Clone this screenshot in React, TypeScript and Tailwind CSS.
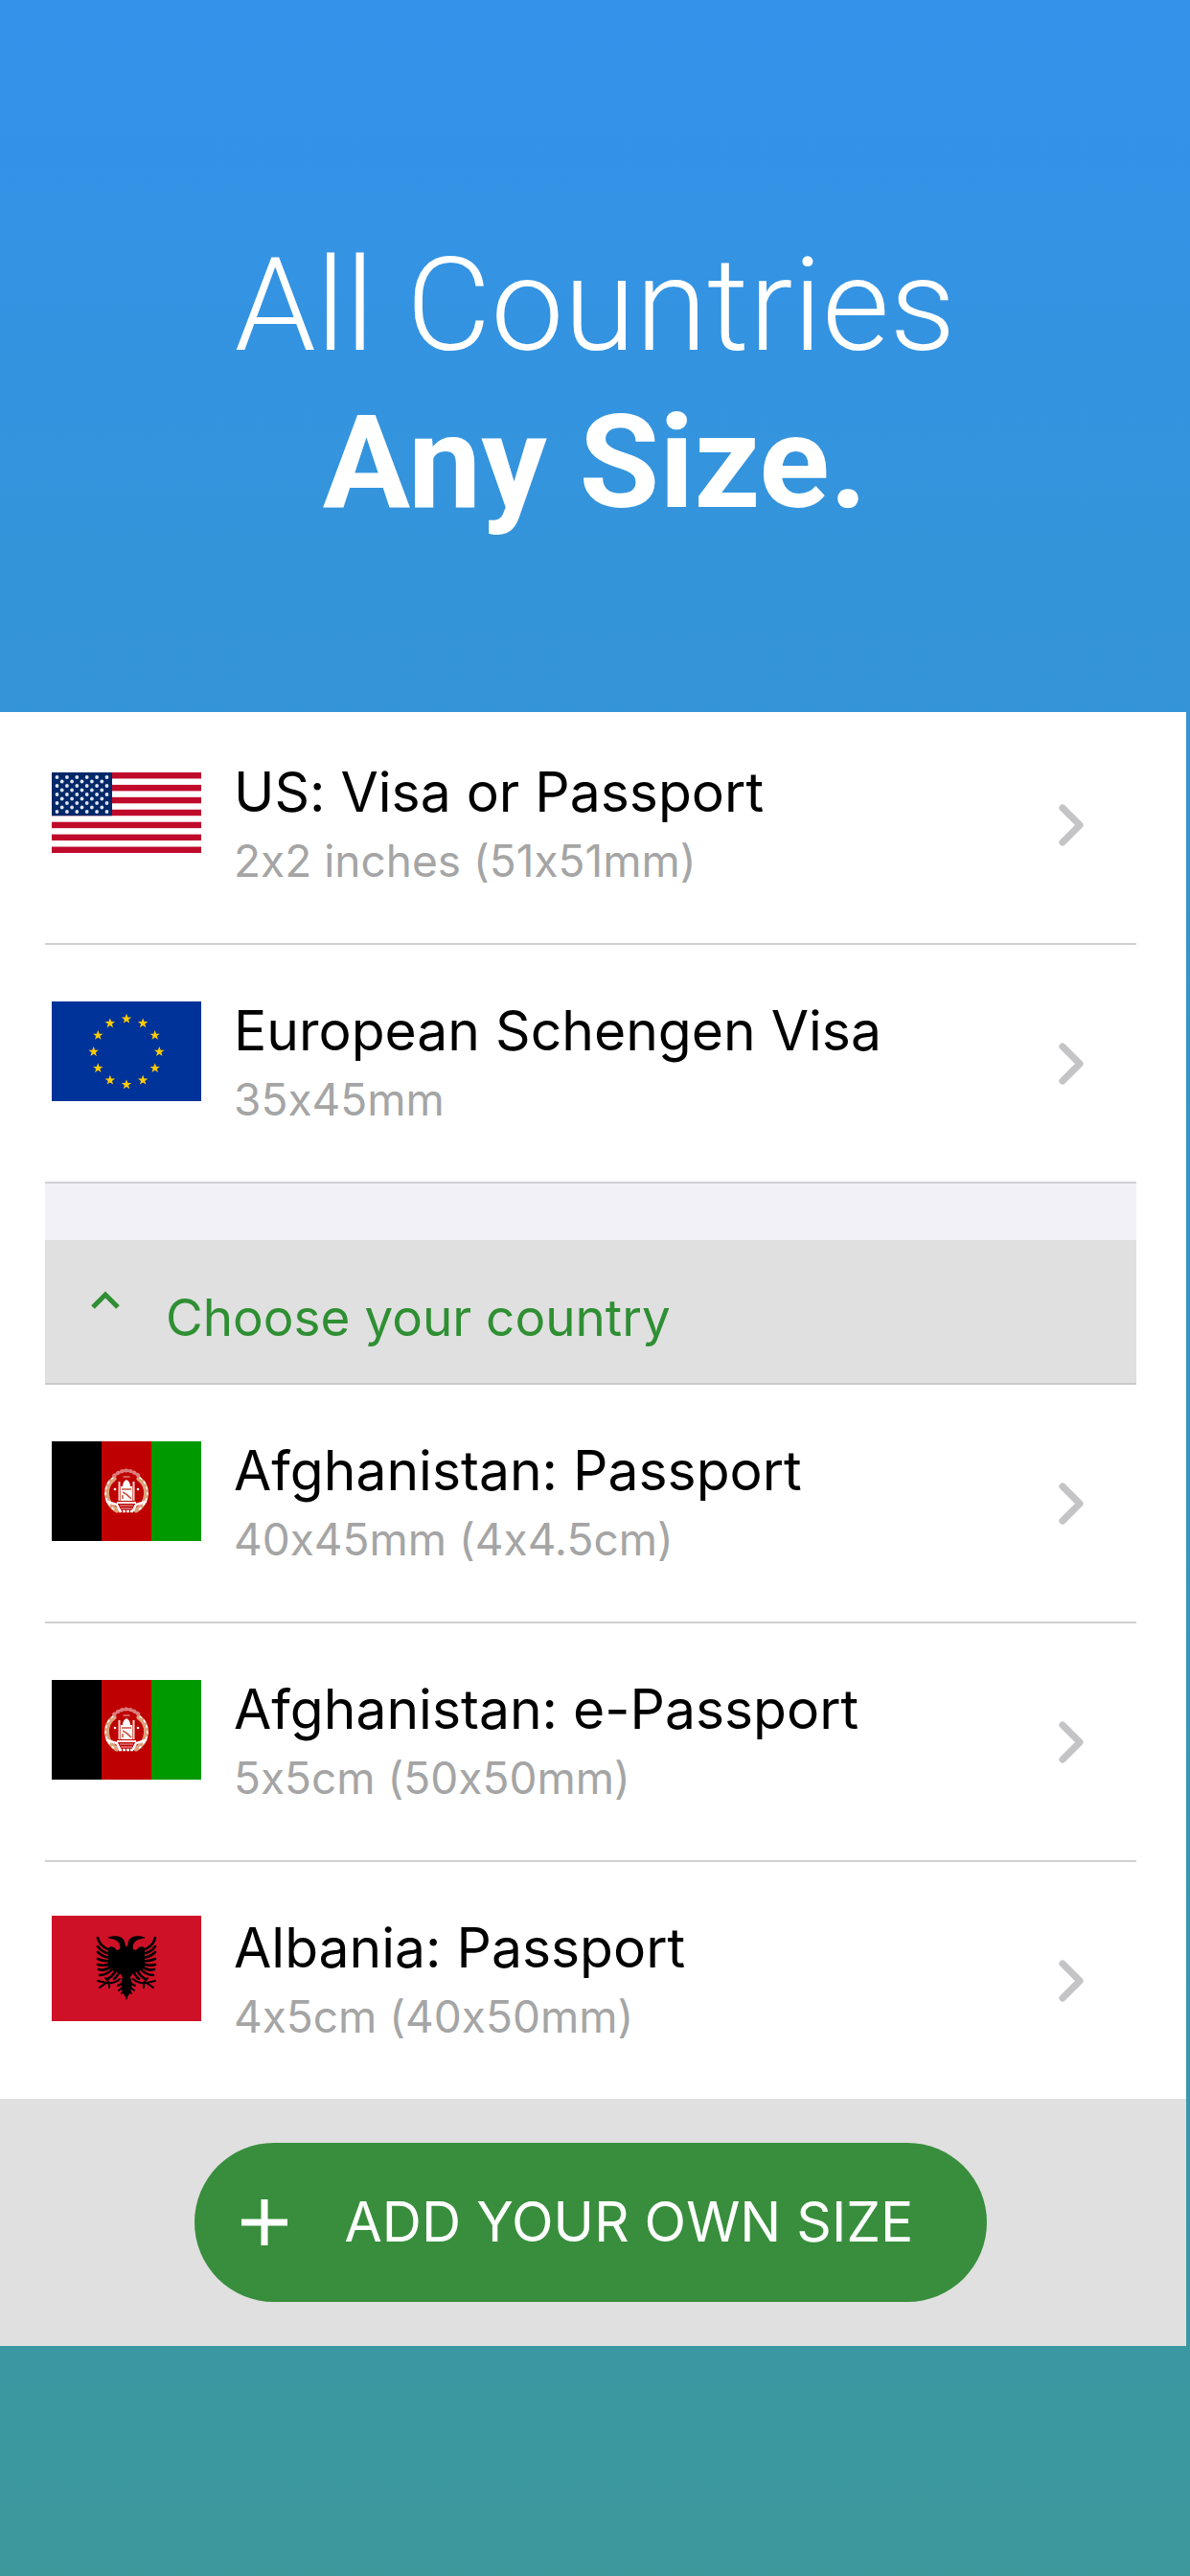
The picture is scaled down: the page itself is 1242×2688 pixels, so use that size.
import { ChevronRight } from 'lucide-react';

type FlagKind = 'us' | 'eu' | 'af' | 'al';

interface DocumentItem {
  flag: FlagKind;
  title: string;
  size: string;
}

const popular: DocumentItem[] = [
  { flag: 'us', title: 'US: Visa or Passport', size: '2x2 inches (51x51mm)' },
  { flag: 'eu', title: 'European Schengen Visa', size: '35x45mm' },
];

const countries: DocumentItem[] = [
  { flag: 'af', title: 'Afghanistan: Passport', size: '40x45mm (4x4.5cm)' },
  { flag: 'af', title: 'Afghanistan: e-Passport', size: '5x5cm (50x50mm)' },
  { flag: 'al', title: 'Albania: Passport', size: '4x5cm (40x50mm)' },
];

function UsFlag() {
  const stars = [];
  for (let row = 0; row < 9; row++) {
    const count = row % 2 === 0 ? 6 : 5;
    for (let i = 0; i < count; i++) {
      stars.push(
        <circle
          key={`${row}-${i}`}
          cx={(row % 2 === 0 ? 5.5 : 10.7) + i * 10.4}
          cy={5 + row * 4.5}
          r="1.9"
          fill="#dfe4f0"
        />
      );
    }
  }

  return (
    <svg className="w-[156px] h-[84px]" viewBox="0 0 156 84" aria-hidden="true">
      <rect width="156" height="84" fill="#fff" />
      {[0, 1, 2, 3, 4, 5, 6].map((i) => (
        <rect key={i} y={(i * 2 * 84) / 13} width="156" height={84 / 13} fill="#bf0a2b" />
      ))}
      <rect width="63" height="45.2" fill="#002868" />
      {stars}
    </svg>
  );
}

function EuFlag() {
  const star = 'M0-5.4 1.4-1.7H5.2L2.1.7 3.2 4.4 0 2.2-3.2 4.4-2.1.7-5.2-1.7H-1.4Z';

  return (
    <svg className="w-[156px] h-[104px]" viewBox="0 0 156 104" aria-hidden="true">
      <rect width="156" height="104" fill="#039" />
      {Array.from({ length: 12 }, (_, i) => {
        const angle = (i * Math.PI) / 6;
        const x = 78 + 34.3 * Math.sin(angle);
        const y = 52.5 - 34.3 * Math.cos(angle);
        return <path key={i} d={star} transform={`translate(${x} ${y})`} fill="#fc0" />;
      })}
    </svg>
  );
}

function AfghanFlag() {
  return (
    <svg className="w-[156px] h-[104px]" viewBox="0 0 156 104" aria-hidden="true">
      <rect width="52" height="104" fill="#000" />
      <rect x="52" width="52" height="104" fill="#be0000" />
      <rect x="104" width="52" height="104" fill="#009900" />
      <g fill="none" strokeLinecap="round">
        {/* wreath */}
        <path d="M65 39C54 47 55 64 68 72" stroke="#dca27c" strokeWidth="5" />
        <path d="M91 39C102 47 101 64 88 72" stroke="#dca27c" strokeWidth="5" />
        <path d="M64 38C53 46 53 65 68 73" stroke="#fff" strokeWidth="1.5" strokeDasharray="2 4" />
        <path d="M92 38C103 46 103 65 88 73" stroke="#fff" strokeWidth="1.5" strokeDasharray="2 4" />
        <path d="M58 63 68 66 71 72M98 63 88 66 85 72" stroke="#fff" strokeWidth="2.5" />
        <path d="M65 36Q78 25 91 36" stroke="#dc7d7d" strokeWidth="4" strokeDasharray="1 3.5" />
        <path d="M75 37H81" stroke="#dc7d7d" strokeWidth="1.5" />
      </g>
      {/* mosque */}
      <path d="M74 47Q74 42 78 40Q82 42 82 47H84V62H72V47Z" fill="#fff" />
      <path d="M70.5 42V62M85.5 42V62" stroke="#f3d9d0" strokeWidth="2" />
      <path d="M73 50H83M74 53Q79 55 83 60M74 60V56" stroke="#c8503c" strokeWidth="1.5" fill="none" />
      <path d="M68 63H88V65H68Z" fill="#fff" />
      <path d="M71 67H85M72 70H84" stroke="#d65c5c" strokeWidth="2" />
      <path d="M70 73H86" stroke="#fff" strokeWidth="2.5" strokeDasharray="3 1" />
      <circle cx="66" cy="50" r="1.3" fill="#fff" />
      <circle cx="90" cy="50" r="1.3" fill="#fff" />
    </svg>
  );
}

// one half of the double-headed eagle, mirrored for the other side
function EagleHalf() {
  return (
    <>
      <path d="M78.5 33C76 31 77 28 75 25C73 21 64 20 58 23L66 25C70 27 72 30 71 35L68 36C65 32 61 31 59 34V53C62 57 67 59 71 60L74 64C72 68 72 74 74 80L77 85 78.5 88Z" />
      <g fill="none" stroke="#000" strokeWidth="2.6" strokeLinecap="round">
        <path d="M61 36Q50 32 48 23" />
        <path d="M61 40Q52 38 48 32" />
        <path d="M61 44Q53 43 48 38" />
        <path d="M61 47Q54 48 48 45" />
        <path d="M61 50Q55 53 48 51" />
        <path d="M62 53Q56 58 49 56" />
        <path d="M64 55Q58 62 50 62" />
        <path d="M67 57Q63 64 58 66" />
        <path d="M71 58Q68 64 65 66" />
        <path d="M71 66Q66 71 57 70L48 68M57 70 50 75M60 70 56 65M60 71 60 75" strokeWidth="2" />
        <path d="M75 70 69 73M75 74 70 78M76 77 73 81" strokeWidth="2" />
      </g>
    </>
  );
}

function AlbanianFlag() {
  return (
    <svg className="w-[156px] h-[110px]" viewBox="0 0 156 110" aria-hidden="true">
      <rect width="156" height="110" fill="#ce1126" />
      <EagleHalf />
      <g transform="translate(156 0) scale(-1 1)">
        <EagleHalf />
      </g>
    </svg>
  );
}

const flags: Record<FlagKind, () => React.JSX.Element> = {
  us: UsFlag,
  eu: EuFlag,
  af: AfghanFlag,
  al: AlbanianFlag,
};

function DocumentRow({ item }: { item: DocumentItem }) {
  const Flag = flags[item.flag];

  return (
    <li className="border-b-2 border-[#d0d0d2] last:border-b-0">
      <button className="w-full flex items-start pt-14 pb-[49px] pl-[7px] pr-8 text-left">
        <span className="h-[110px] flex items-center">
          <Flag />
        </span>
        <span className="flex-1 pl-[34px]">
          <span className="block text-[57px] leading-[68px] text-black">{item.title}</span>
          <span className="block text-[46px] leading-[74px] text-[#a5a5a5]">{item.size}</span>
        </span>
        <ChevronRight className="size-[72px] mt-8 text-[#c4c4c6]" strokeWidth={2.4} />
      </button>
    </li>
  );
}

export default function App() {
  return (
    <div className="min-h-screen bg-linear-to-b from-[#3492eb] to-[#3c989b] font-['Inter',sans-serif] [font-feature-settings:'calt'_0]">
      <header className="h-[743px] pt-[237px] text-center text-white text-[136px] leading-[164px] font-['Roboto',sans-serif]">
        <h1>
          <span className="block font-light">All Countries</span>
          <span className="block font-bold">Any Size.</span>
        </h1>
      </header>

      <main className="mr-1 bg-white">
        <div className="pl-[47px] pr-[52px]">
          <ul className="[&>li:first-child>button]:pt-[50px]">
            {popular.map((item) => (
              <DocumentRow key={item.title} item={item} />
            ))}
          </ul>

          <div className="h-[61px] bg-[#f2f1f7] border-t-2 border-[#d0d0d2]" />
          <button className="w-full h-[151px] flex items-center pl-12 pt-3 bg-[#e0e0e0] border-b-2 border-[#cbcbcb] text-[#2f8f33]">
            <svg className="w-[30px] h-5 mb-9" viewBox="0 0 30 20" fill="none" stroke="currentColor" strokeWidth="5" aria-hidden="true">
              <path d="M2 17 15 4 28 17" />
            </svg>
            <span className="pl-[48px] text-[53px] leading-[68px]">Choose your country</span>
          </button>

          <ul>
            {countries.map((item) => (
              <DocumentRow key={item.title} item={item} />
            ))}
          </ul>
        </div>

        <footer className="h-[258px] flex items-center justify-center pr-[6px] bg-[#e0e0e0]">
          <button className="w-[827px] h-[166px] flex items-center rounded-full bg-[#388e3c] pl-[49px] text-white">
            <svg className="size-12" viewBox="0 0 48 48" stroke="currentColor" strokeWidth="7" aria-hidden="true">
              <path d="M24 0V48M0 24H48" />
            </svg>
            <span className="pl-[60px] text-[57px] leading-[68px]">ADD YOUR OWN SIZE</span>
          </button>
        </footer>
      </main>
    </div>
  );
}
